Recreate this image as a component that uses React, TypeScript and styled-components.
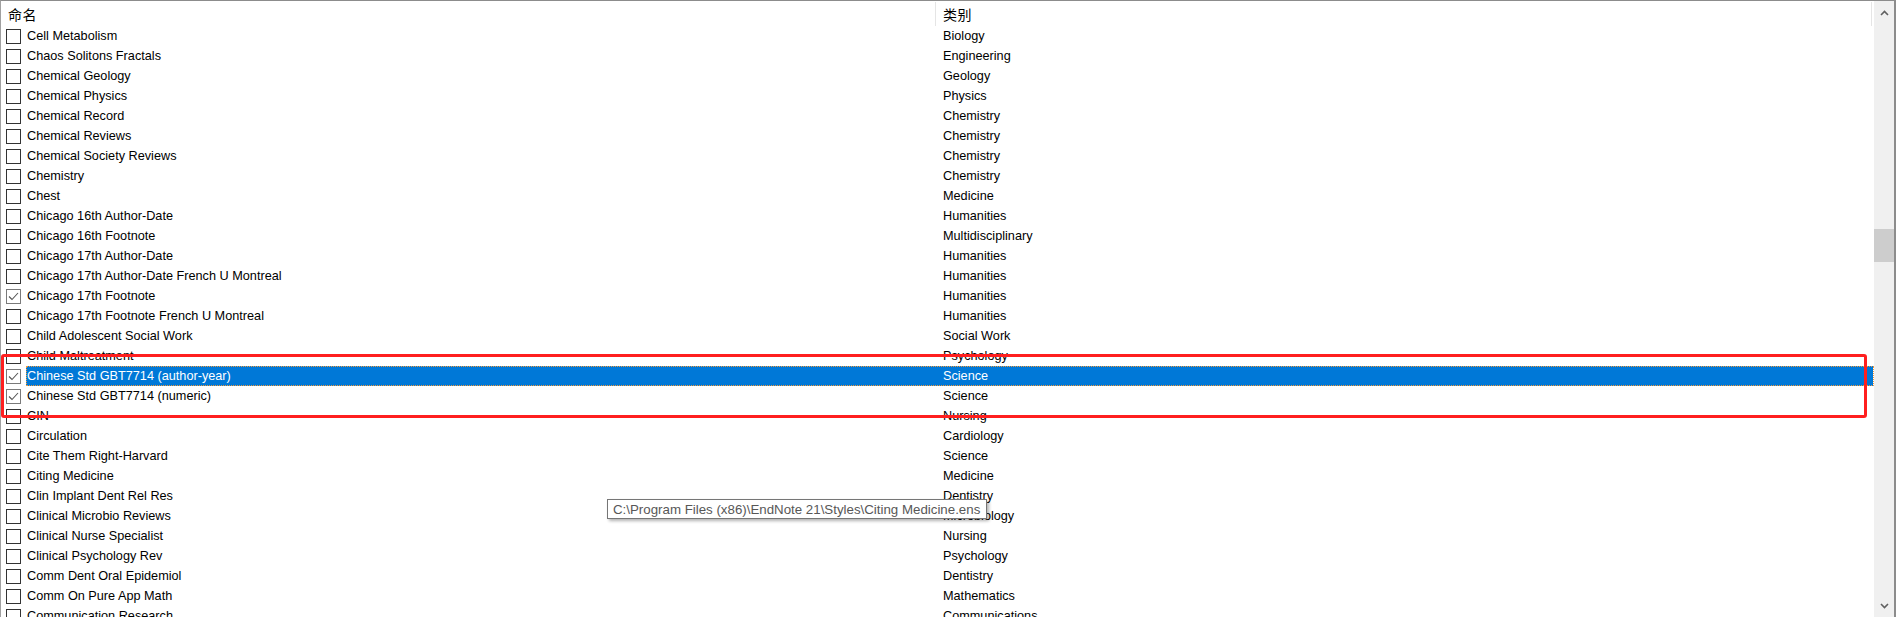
import React from 'react';
import styled, { createGlobalStyle } from 'styled-components';

const GlobalStyle = createGlobalStyle`
  html, body {
    margin: 0;
    padding: 0;
    background: #ffffff;
    overflow: hidden;
  }
  body {
    font-family: "Liberation Sans", Arial, "Noto Sans CJK SC", sans-serif;
  }
`;

interface Style {
  name: string;
  category: string;
  checked?: boolean;
  selected?: boolean;
}

const styles: Style[] = [
  { name: 'Cell Metabolism', category: 'Biology' },
  { name: 'Chaos Solitons Fractals', category: 'Engineering' },
  { name: 'Chemical Geology', category: 'Geology' },
  { name: 'Chemical Physics', category: 'Physics' },
  { name: 'Chemical Record', category: 'Chemistry' },
  { name: 'Chemical Reviews', category: 'Chemistry' },
  { name: 'Chemical Society Reviews', category: 'Chemistry' },
  { name: 'Chemistry', category: 'Chemistry' },
  { name: 'Chest', category: 'Medicine' },
  { name: 'Chicago 16th Author-Date', category: 'Humanities' },
  { name: 'Chicago 16th Footnote', category: 'Multidisciplinary' },
  { name: 'Chicago 17th Author-Date', category: 'Humanities' },
  { name: 'Chicago 17th Author-Date French U Montreal', category: 'Humanities' },
  { name: 'Chicago 17th Footnote', category: 'Humanities', checked: true },
  { name: 'Chicago 17th Footnote French U Montreal', category: 'Humanities' },
  { name: 'Child Adolescent Social Work', category: 'Social Work' },
  { name: 'Child Maltreatment', category: 'Psychology' },
  { name: 'Chinese Std GBT7714 (author-year)', category: 'Science', checked: true, selected: true },
  { name: 'Chinese Std GBT7714 (numeric)', category: 'Science', checked: true },
  { name: 'CIN', category: 'Nursing' },
  { name: 'Circulation', category: 'Cardiology' },
  { name: 'Cite Them Right-Harvard', category: 'Science' },
  { name: 'Citing Medicine', category: 'Medicine' },
  { name: 'Clin Implant Dent Rel Res', category: 'Dentistry' },
  { name: 'Clinical Microbio Reviews', category: 'Microbiology' },
  { name: 'Clinical Nurse Specialist', category: 'Nursing' },
  { name: 'Clinical Psychology Rev', category: 'Psychology' },
  { name: 'Comm Dent Oral Epidemiol', category: 'Dentistry' },
  { name: 'Comm On Pure App Math', category: 'Mathematics' },
  { name: 'Communication Research', category: 'Communications' },
];

const Window = styled.div`
  position: relative;
  width: 1896px;
  height: 617px;
  box-sizing: border-box;
  border-top: 1px solid #8c8c8c;
  border-left: 1px solid #a0a0a0;
  border-right: 2px solid #8c8c8c;
  display: grid;
  grid-template-columns: 1fr 20px;
  overflow: hidden;
  background: #fff;
`;

const ListView = styled.div`
  display: flex;
  flex-direction: column;
  overflow: hidden;
  min-width: 0;
`;

const HeaderRow = styled.div`
  display: grid;
  grid-template-columns: 935px 936px;
  height: 25px;
  flex-shrink: 0;
`;

const HeaderCell = styled.div`
  display: flex;
  align-items: center;
  padding-left: 7px;
  border-right: 1px solid #e5e5e5;
  margin: 1px 0 0;
  font-family: "Noto Sans CJK SC", "Liberation Sans", sans-serif;
  font-size: 14px;
  color: #000;
  letter-spacing: 0.5px;
`;

const Row = styled.div`
  display: grid;
  grid-template-columns: 935px 937px;
  height: 20px;
  flex-shrink: 0;
  position: relative;
`;

const NameCell = styled.div`
  display: flex;
  align-items: center;
  height: 20px;
`;

const CheckBox = styled.span<{ $checked?: boolean }>`
  width: 15px;
  height: 15px;
  box-sizing: border-box;
  margin-left: 5px;
  border: 1px solid ${p => (p.$checked ? '#7a7a7a' : '#333333')};
  background: #fff;
  display: flex;
  align-items: center;
  justify-content: center;
  flex-shrink: 0;
`;

const Label = styled.span<{ $selected?: boolean }>`
  flex: 1;
  height: 20px;
  display: flex;
  align-items: center;
  margin-left: 5px;
  padding-left: 1px;
  font-size: 12.7px;
  white-space: nowrap;
  color: ${p => (p.$selected ? '#fff' : '#000')};
  background: ${p => (p.$selected ? '#0078d7' : 'transparent')};
`;

const CategoryCell = styled.div<{ $selected?: boolean }>`
  display: flex;
  align-items: center;
  height: 20px;
  padding-left: 7px;
  font-size: 12.7px;
  white-space: nowrap;
  color: ${p => (p.$selected ? '#fff' : '#000')};
  background: ${p => (p.$selected ? '#0078d7' : 'transparent')};
`;

const FocusRect = styled.div`
  position: absolute;
  left: 25px;
  right: 0;
  top: 0;
  bottom: 0;
  border: 1px dotted #f39a3a;
  pointer-events: none;
`;

const ScrollBar = styled.div`
  background: #f0f0f0;
  display: flex;
  flex-direction: column;
  align-items: center;
  padding-top: 1px;
`;

const Arrow = styled.div`
  height: 22px;
  width: 100%;
  display: flex;
  align-items: center;
  justify-content: center;
  flex-shrink: 0;
`;

const Track = styled.div`
  flex: 1;
  width: 100%;
  display: flex;
  flex-direction: column;
`;

const Thumb = styled.div`
  margin-top: 205px;
  height: 33px;
  width: 100%;
  background: #cdcdcd;
`;

const Annotation = styled.div`
  position: absolute;
  left: 0;
  top: 353px;
  width: 1866px;
  height: 64px;
  box-sizing: border-box;
  border: 3px solid #ff1f1f;
  border-radius: 3px;
  pointer-events: none;
`;

const Tooltip = styled.div`
  position: absolute;
  left: 606px;
  top: 498px;
  height: 20px;
  box-sizing: border-box;
  padding: 0 6px 0 5px;
  display: flex;
  align-items: center;
  border: 1px solid #767676;
  background: #fff;
  color: #575757;
  font-size: 13.3px;
  white-space: nowrap;
  box-shadow: 2px 2px 3px rgba(0, 0, 0, 0.3);
`;

const Check = () => (
  <svg width="11" height="9" viewBox="0 0 11 9">
    <path d="M1 4.5 L4 7.5 L10 1" fill="none" stroke="#555" strokeWidth="1.1" />
  </svg>
);

const Chevron = ({ up }: { up?: boolean }) => (
  <svg width="9" height="6" viewBox="0 0 9 6">
    <path
      d={up ? 'M1 5 L4.5 1.5 L8 5' : 'M1 1 L4.5 4.5 L8 1'}
      fill="none"
      stroke="#606060"
      strokeWidth="1.6"
    />
  </svg>
);

const App: React.FC = () => {
  return (
    <>
      <GlobalStyle />
      <Window>
        <ListView>
          <HeaderRow>
            <HeaderCell>命名</HeaderCell>
            <HeaderCell>类别</HeaderCell>
          </HeaderRow>
          {styles.map(s => (
            <Row key={s.name}>
              <NameCell>
                <CheckBox $checked={s.checked}>{s.checked && <Check />}</CheckBox>
                <Label $selected={s.selected}>{s.name}</Label>
              </NameCell>
              <CategoryCell $selected={s.selected}>{s.category}</CategoryCell>
              {s.selected && <FocusRect />}
            </Row>
          ))}
        </ListView>
        <ScrollBar>
          <Arrow>
            <Chevron up />
          </Arrow>
          <Track>
            <Thumb />
          </Track>
          <Arrow>
            <Chevron />
          </Arrow>
        </ScrollBar>
        <Annotation />
        <Tooltip>C:\Program Files (x86)\EndNote 21\Styles\Citing Medicine.ens</Tooltip>
      </Window>
    </>
  );
};

export default App;
